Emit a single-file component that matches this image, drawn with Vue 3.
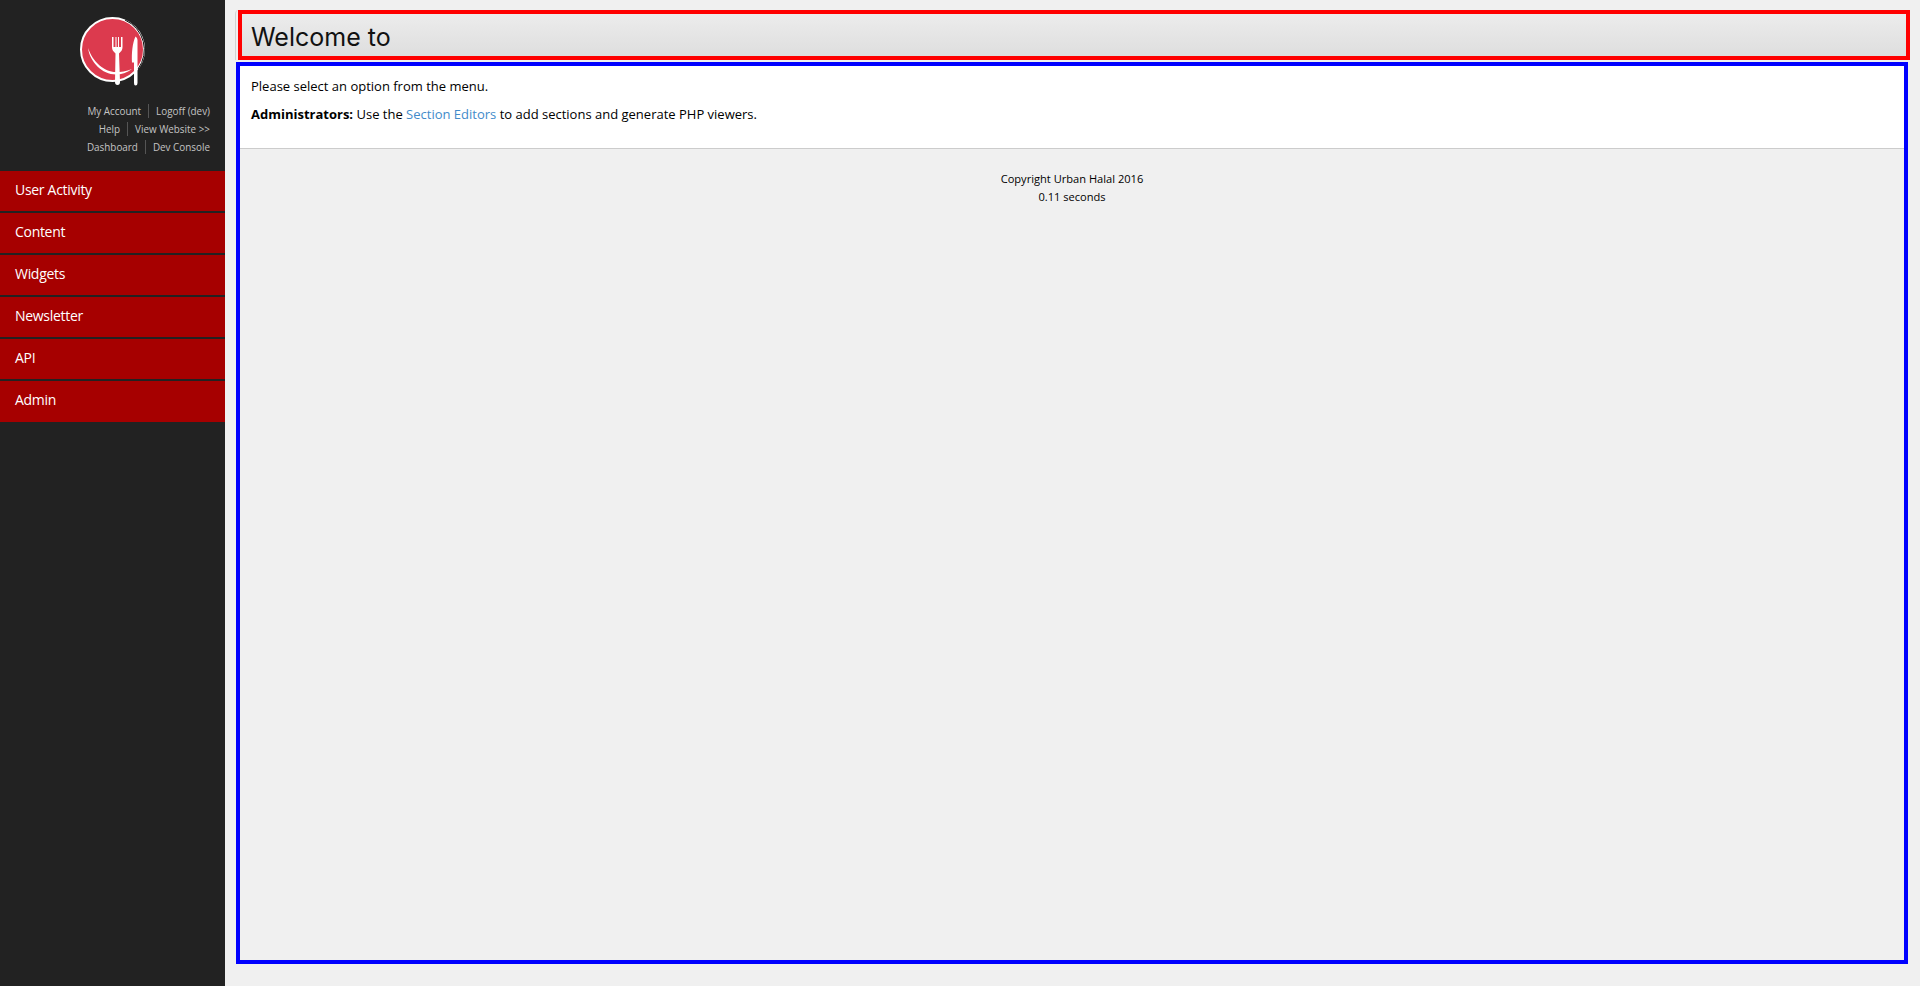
<script setup>
const linkRows = [
  ['My Account', 'Logoff (dev)'],
  ['Help', 'View Website >>'],
  ['Dashboard', 'Dev Console'],
]
const menu = ['User Activity', 'Content', 'Widgets', 'Newsletter', 'API', 'Admin']
</script>

<template>
  <div class="page">
    <aside class="sidebar">
      <div class="logo">
        <svg width="70" height="72" viewBox="0 0 70 72">
          <circle cx="32.500" cy="33.500" r="31.500" fill="#dc3a4e" stroke="#fff" stroke-width="2" />
          <path d="M45 4 A32.500 32.500 0 0 1 58 53" fill="none" stroke="#111" stroke-width="1" />
          <path d="M8 32 C10 46 22 58.500 36 58.500 C41 58.500 47 57 52 53 C46 55.500 41 56 36 56 C24 56 13 46 8 32 Z" fill="#fff" />
          <path d="M32 21 V31 C32 35 34.500 36 35.500 37.500 L35 66 Q35 69 37.500 69 Q40 69 40 66 L39 37.500 C40 36 42.500 35 42.500 31 V21 H41 V31 H39 V21 H38 V31 H36.500 V21 H35.500 V31 H33.500 V21 Z" fill="#fff" />
          <path d="M55.500 20.500 C52.500 27 51.500 37 52 46.500 H54 V67 Q54 69.500 55.500 69.500 Q57.500 69.500 57.500 67 V24 Q57.500 21.500 55.500 20.500 Z" fill="#fff" />
        </svg>
      </div>
      <div class="account-links">
        <div v-for="row in linkRows" :key="row[0]" class="link-row">
          <span>{{ row[0] }}</span><i class="sep"></i><span>{{ row[1] }}</span>
        </div>
      </div>
      <nav class="menu">
        <a v-for="item in menu" :key="item" class="menu-item">{{ item }}</a>
      </nav>
    </aside>
    <main class="main">
      <div class="title-wrap">
        <h1 class="title">Welcome to</h1>
      </div>
      <section class="panel">
        <div class="intro">
          <p>Please select an option from the menu.</p>
          <p><strong>Administrators:</strong> Use the <a class="link">Section Editors</a> to add sections and generate PHP viewers.</p>
        </div>
        <footer class="foot">
          <div>Copyright Urban Halal 2016</div>
          <div>0.11 seconds</div>
        </footer>
      </section>
    </main>
  </div>
</template>

<style>
html, body { margin: 0; background: #f0f0f0; }
</style>

<style scoped>
.page {
  display: flex;
  height: 986px;
  overflow: hidden;
  background: #f0f0f0;
  font-family: "Open Sans", "Liberation Sans", sans-serif;
  color: #000;
}
.sidebar {
  width: 225px;
  flex: none;
  background: #222;
  display: flex;
  flex-direction: column;
}
.logo {
  height: 102px;
  padding: 16px 0 0 80px;
  box-sizing: border-box;
}
.logo svg { display: block; }
.account-links {
  padding-right: 15px;
  height: 69px;
  font-size: 9.9px;
  color: #c4c4c4;
}
.link-row {
  display: flex;
  justify-content: flex-end;
  align-items: center;
  height: 18px;
}
.sep {
  width: 1px;
  height: 14px;
  background: #555;
  margin: 0 7px;
}
.menu { display: flex; flex-direction: column; }
.menu-item {
  height: 40px;
  margin-bottom: 2px;
  background: #a60000;
  color: #fff;
  font-size: 14px;
  letter-spacing: -0.3px;
  line-height: 38px;
  padding-left: 15px;
}
.menu-item:last-child { height: 41px; }
.main {
  flex: 1;
  min-width: 0;
  padding: 10px 10px 0 11px;
  display: flex;
  flex-direction: column;
}
.title-wrap {
  margin-left: -1px;
  padding-left: 2px;
  border-left: 1px solid #d2d2d2;
  border-top-left-radius: 4px;
  margin-bottom: 2px;
}
.title {
  margin: 0;
  height: 50px;
  box-sizing: border-box;
  border: 4px solid #f00;
  background: linear-gradient(#ececec, #dedede);
  font-family: Inter, "Liberation Sans", sans-serif;
  font-weight: 400;
  font-size: 25px;
  line-height: 46px;
  padding-left: 9px;
  color: #111;
}
.panel {
  margin-right: 2px;
  height: 902px;
  box-sizing: border-box;
  border: 4px solid #00f;
  font-size: 13px;
}
.intro {
  background: #fff;
  height: 83px;
  box-sizing: border-box;
  border-bottom: 1px solid #ccc;
  padding: 11px 11px 0;
}
.intro p { margin: 0 0 10px; line-height: 18px; }
.link { color: #428bca; }
.foot {
  padding-top: 21px;
  text-align: center;
  font-size: 11.1px;
  line-height: 18px;
  color: #000;
}
</style>
